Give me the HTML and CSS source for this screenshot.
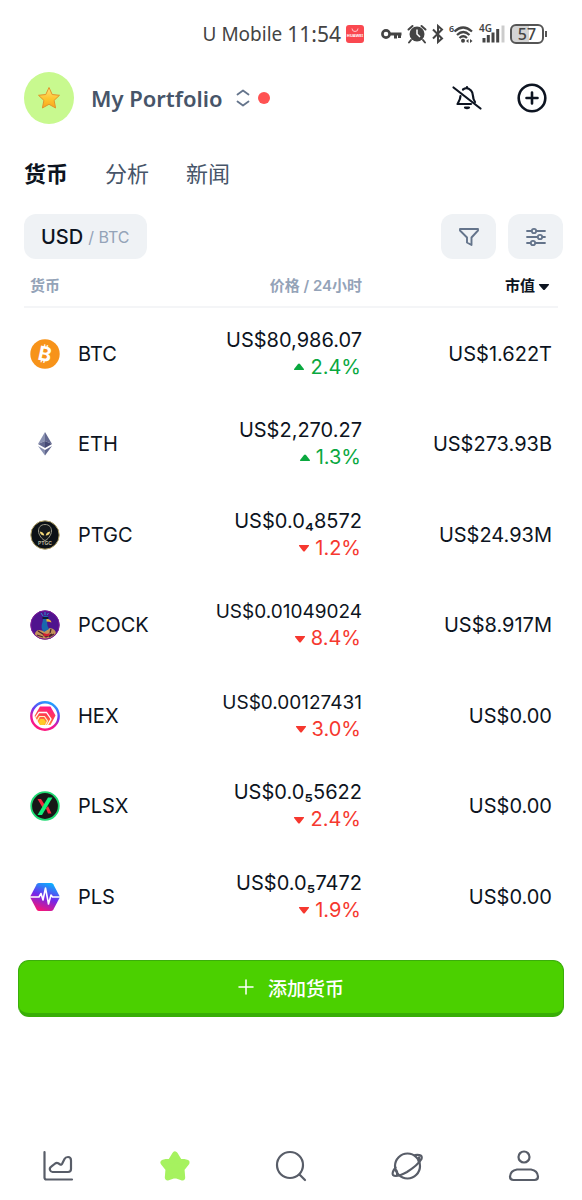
FILE: index.html
```html
<!DOCTYPE html>
<html lang="zh-CN">
<head>
<meta charset="utf-8">
<meta name="viewport" content="width=device-width, initial-scale=1">
<title>My Portfolio</title>
<link rel="stylesheet" href="styles.css">
</head>
<body>
<div class="status-bar">
  <span class="carrier">U Mobile</span>
  <span class="clock">11:54</span>
  <svg class="app-badge" width="18" height="18" viewBox="0 0 18 18" aria-hidden="true"><rect width="18" height="18" rx="3" fill="#fa4850"/><path d="M6 3.500a3 3 0 0 0 6 0" fill="none" stroke="#ffc4c8" stroke-width="1"/><text x="9" y="12" text-anchor="middle" font-size="4" font-weight="700" fill="#fff">HUAWEI</text></svg>
  <svg width="21" height="14" viewBox="0 0 21 14" fill="none" stroke="#444" aria-hidden="true"><circle cx="5" cy="7" r="3.600" stroke-width="2.600"/><path d="M9 7h11.500M14.500 7v4.500M18.500 7v4" stroke-width="3"/></svg>
  <svg class="alarm" width="20" height="20" viewBox="0 0 20 20" aria-hidden="true"><circle cx="10" cy="10" r="7.500" fill="#444"/><path d="M1.500 5.500l4-3.500M18.500 5.500l-4-3.500M4 16l-2 2.500M16 16l2 2.500" stroke="#444" stroke-width="2" stroke-linecap="round"/><path d="M10 5.500V10l3 3" fill="none" stroke="#fff" stroke-width="1.500"/></svg>
  <svg width="12" height="20" viewBox="0 0 12 20" fill="none" stroke="#444" stroke-width="2" aria-hidden="true"><path d="M1 5.500l9 9-4 3.500V2l4 3.500-9 9"/></svg>
  <svg width="25" height="24" viewBox="0 -2 25 24" aria-hidden="true"><text x="0" y="8" font-size="9" font-weight="600" fill="#444">6</text><path d="M5.500 7.500q8.500-8 17.500 0M8 11q6.300-6 12.500 0M10.500 14q3.700-3.500 7.500 0" fill="none" stroke="#444" stroke-width="2.200"/><circle cx="14" cy="16.800" r="2" fill="#444"/><path d="M17 17l2.500-2v4zM23.500 17L21 15v4z" fill="#444"/></svg>
  <svg width="26" height="24" viewBox="0 -2 26 24" aria-hidden="true"><text x="0" y="8" font-size="10" font-weight="600" fill="#444">4G</text><path d="M5 14v4.500M9.300 11v7.500M14 8.500v10M18.700 5v13.500" stroke="#444" stroke-width="3"/><path d="M24 1.500v17" stroke="#ccc" stroke-width="3"/></svg>
  <span class="battery">57</span>
</div>

<header class="top">
  <span class="avatar"><svg width="24" height="24" viewBox="0 0 24 24" aria-hidden="true"><defs><linearGradient id="gold" x1="0" y1="0" x2="0" y2="1"><stop offset="0" stop-color="#ffe27a"/><stop offset=".55" stop-color="#fdc62f"/><stop offset="1" stop-color="#f9a51b"/></linearGradient></defs><path d="M12 1.500l3.200 7 7.300.8-5.400 5.100 1.500 7.600L12 18.300 5.400 22l1.500-7.600L1.500 9.300l7.300-.8z" fill="url(#gold)" stroke="#e3942a" stroke-width="1" stroke-linejoin="round"/></svg></span>
  <button class="portfolio" type="button">My Portfolio
    <svg width="14" height="18" viewBox="0 0 14 18" fill="none" stroke="#64748b" stroke-width="1.800" stroke-linecap="round" stroke-linejoin="round" aria-hidden="true"><path d="M1.500 5.500L7 1.500l5.500 4M1.500 12.500l5.500 4 5.500-4"/></svg>
  </button>
  <span class="alert-dot"></span>
  <button class="icon-button bell" type="button" aria-label="通知">
    <svg width="30" height="30" viewBox="0 0 30 30" fill="none" stroke="#0d1421" stroke-width="2.200" stroke-linecap="round" stroke-linejoin="round" aria-hidden="true"><path d="M1.500 4.500l27 21"/><path d="M11 6.500Q15 3.500 19 7.500q2 2 2 5.500 0 3 2 6M15 4v1M8.500 13c0 3-1 4.500-3 8H19"/><path d="M13 24.500a3 2 0 0 0 4 0z" fill="#0d1421"/></svg>
  </button>
  <button class="icon-button" type="button" aria-label="添加">
    <svg width="30" height="30" viewBox="0 0 30 30" fill="none" stroke="#0d1421" stroke-width="2.600" stroke-linecap="round" aria-hidden="true"><circle cx="15" cy="15" r="13.300"/><path d="M15 9.500v11M9.500 15h11"/></svg>
  </button>
</header>

<nav class="tabs" aria-label="视图">
  <a class="tab tab-active" href="#coins">货币</a>
  <a class="tab" href="#analysis">分析</a>
  <a class="tab" href="#news">新闻</a>
</nav>

<main>
  <div class="controls">
    <button class="pill currency" type="button"><span class="currency-on">USD</span><span class="currency-off">/ BTC</span></button>
    <button class="pill tool" type="button" aria-label="筛选">
      <svg width="22" height="20" viewBox="0 0 22 20" fill="none" stroke="#64748b" stroke-width="1.900" stroke-linejoin="round" aria-hidden="true"><path d="M2 2h18v1.500l-6.500 7V18L9 15.500v-5L2 3.500z"/></svg>
    </button>
    <button class="pill tool" type="button" aria-label="设置">
      <svg width="20" height="20" viewBox="0 0 20 20" fill="none" stroke="#64748b" stroke-width="1.800" stroke-linecap="round" aria-hidden="true"><path d="M1 4h4.500M10.500 4H19M1 10h10.500M16.500 10H19M1 16h3.500M9.500 16H19"/><circle cx="8" cy="4" r="2.200"/><circle cx="14" cy="10" r="2.200"/><circle cx="7" cy="16" r="2.200"/></svg>
    </button>
  </div>

  <table class="coins" id="coins">
    <thead>
      <tr><th class="col-name" scope="col">货币</th><th class="col-price" scope="col">价格 / 24小时</th><th class="col-cap" scope="col"><button class="sort" type="button">市值<svg width="12" height="12" viewBox="0 -4 12 12" aria-hidden="true"><path d="M1.500 1h9q1 0 .4.900L7 6.500q-1 1-2 0L1.100 1.900Q.500 1 1.500 1z" fill="#0d1421"/></svg></button></th></tr>
    </thead>
    <tbody>
      <tr>
        <td><div class="coin"><svg width="30" height="30" viewBox="0 0 30 30" aria-hidden="true"><circle cx="15" cy="15" r="14.700" fill="#f7931a"/><text x="15" y="22" text-anchor="middle" font-size="20" font-weight="700" fill="#fff" transform="rotate(12 15 15)">₿</text></svg>BTC</div></td>
        <td><div class="price">US$80,986.07</div><div class="change up"><svg width="12" height="10" viewBox="0 0 12 10" aria-hidden="true"><path d="M1.500 8q-1-.200-.4-.9L5 2q1-1 2 0l3.900 5.100q.6.700-.4.900z" fill="currentColor"/></svg>2.4%</div></td>
        <td>US$1.622T</td>
      </tr>
      <tr>
        <td><div class="coin"><svg width="30" height="30" viewBox="0 0 30 30" aria-hidden="true"><path d="M15 3L8 15l7-3z" fill="#8a92b2"/><path d="M15 3l7 12-7-3z" fill="#62688f"/><path d="M8 15l7-3v7z" fill="#62688f"/><path d="M22 15l-7-3v7z" fill="#454a75"/><path d="M8 17l7 4v5.500z" fill="#8a92b2"/><path d="M22 17l-7 4v5.500z" fill="#62688f"/></svg>ETH</div></td>
        <td><div class="price">US$2,270.27</div><div class="change up"><svg width="12" height="10" viewBox="0 0 12 10" aria-hidden="true"><path d="M1.500 8q-1-.200-.4-.9L5 2q1-1 2 0l3.900 5.100q.6.700-.4.900z" fill="currentColor"/></svg>1.3%</div></td>
        <td>US$273.93B</td>
      </tr>
      <tr>
        <td><div class="coin"><svg width="30" height="30" viewBox="0 0 30 30" aria-hidden="true"><circle cx="15" cy="15" r="14.200" fill="#0c1116" stroke="#b5a56a" stroke-width="1"/><path d="M15 4.500c4.500 0 6.500 3 6.500 6.500 0 4-4 9-6.500 9.500-2.500-.5-6.500-5.500-6.500-9.500 0-3.500 2-6.500 6.500-6.500z" fill="#15191b" stroke="#9b9987" stroke-width="1"/><path d="M9.800 11.500q4 .5 4.500 4-4 0-4.500-4zM20.200 11.500q-4 .5-4.500 4 4 0 4.500-4z" fill="#f4d97a"/><text x="15" y="25" text-anchor="middle" font-size="5" font-weight="700" fill="#b9b59c">PTGC</text></svg>PTGC</div></td>
        <td><div class="price">US$0.0₄8572</div><div class="change down"><svg width="12" height="10" viewBox="0 0 12 10" aria-hidden="true"><path d="M1.500 2q-1 .2-.4.900L5 8q1 1 2 0l3.900-5.100q.6-.7-.4-.9z" fill="currentColor"/></svg>1.2%</div></td>
        <td>US$24.93M</td>
      </tr>
      <tr>
        <td><div class="coin"><svg width="30" height="30" viewBox="0 0 30 30" aria-hidden="true"><defs><clipPath id="disc"><circle cx="15" cy="15" r="14.500"/></clipPath></defs><circle cx="15" cy="15" r="14.500" fill="#4f138e"/><g clip-path="url(#disc)"><path d="M5 27q-1-6 4-7l5 1 6-3q6 1 6 6l-6 6H9z" fill="#c3935a"/><path d="M8 21l5 3 3 3 6-3M7 25l6 2M19 27l5-3M21 19l-1 4" stroke="#4b2430" stroke-width="1.300" fill="none"/><path d="M13 23l4 1 3-1-1 3-5 .5z" fill="#d41f32"/><path d="M13.500 6q5-1.500 5.500 3l-2 3q0 4 2 7l-5 3q-4-4-1.500-10z" fill="#1968ad"/><path d="M13 6l-2-3M15 5V2M17 5l1.500-2" stroke="#2c8fca" stroke-width="1"/><path d="M16.500 9q4-.5 5 3.500-2-1-5-1z" fill="#f4b63a"/><path d="M12.500 8h6" stroke="#101a36" stroke-width="2"/></g><circle cx="15" cy="15" r="14.200" fill="none" stroke="#7d1b98" stroke-width="1"/></svg>PCOCK</div></td>
        <td><div class="price price-long">US$0.01049024</div><div class="change down"><svg width="12" height="10" viewBox="0 0 12 10" aria-hidden="true"><path d="M1.500 2q-1 .2-.4.900L5 8q1 1 2 0l3.900-5.100q.6-.7-.4-.9z" fill="currentColor"/></svg>8.4%</div></td>
        <td>US$8.917M</td>
      </tr>
      <tr>
        <td><div class="coin"><svg width="30" height="30" viewBox="0 0 30 30" aria-hidden="true"><defs><linearGradient id="ring" x1=".7" y1="0" x2=".3" y2="1"><stop offset="0" stop-color="#20a5ff"/><stop offset=".4" stop-color="#6b38f2"/><stop offset=".7" stop-color="#ee169a"/><stop offset="1" stop-color="#ff197c"/></linearGradient><linearGradient id="hot" x1=".7" y1="0" x2=".3" y2="1"><stop offset="0" stop-color="#ff1493"/><stop offset=".5" stop-color="#ff414b"/><stop offset="1" stop-color="#ffb628"/></linearGradient></defs><circle cx="15" cy="15" r="13.700" fill="#fff" stroke="url(#ring)" stroke-width="2.400"/><path d="M10 5.500h10.500l5 9-5 9.500H10L4.500 15z" fill="url(#hot)"/><path d="M5.500 16.500l3.500-5h7.500l4.500 6.500-3.500 6" fill="none" stroke="#fff" stroke-width="1.300"/><path d="M7 20l2.500-4.500h5l3 4.500-2 4" fill="none" stroke="#fff3c8" stroke-width="1.200"/><path d="M10.500 18h3.500l2 3-2 3h-3.500l-2-3z" fill="#ffc928"/></svg>HEX</div></td>
        <td><div class="price price-long">US$0.00127431</div><div class="change down"><svg width="12" height="10" viewBox="0 0 12 10" aria-hidden="true"><path d="M1.500 2q-1 .2-.4.900L5 8q1 1 2 0l3.900-5.100q.6-.7-.4-.9z" fill="currentColor"/></svg>3.0%</div></td>
        <td>US$0.00</td>
      </tr>
      <tr>
        <td><div class="coin"><svg width="30" height="30" viewBox="0 0 30 30" aria-hidden="true"><circle cx="15" cy="15" r="13.800" fill="#171717" stroke="#1fdb72" stroke-width="1.800"/><path d="M7.500 8H11l3.500 5.500-2 3zM16 17.500l2-2.500 3.500 7.500H18z" fill="#f02a3d"/><path d="M18 6.500h4.500L12 24H7.500z" fill="#10f27a"/></svg>PLSX</div></td>
        <td><div class="price">US$0.0₅5622</div><div class="change down"><svg width="12" height="10" viewBox="0 0 12 10" aria-hidden="true"><path d="M1.500 2q-1 .2-.4.900L5 8q1 1 2 0l3.900-5.100q.6-.7-.4-.9z" fill="currentColor"/></svg>2.4%</div></td>
        <td>US$0.00</td>
      </tr>
      <tr>
        <td><div class="coin"><svg width="30" height="30" viewBox="0 0 30 30" aria-hidden="true"><defs><linearGradient id="pulse" x1=".7" y1="0" x2=".3" y2="1"><stop offset="0" stop-color="#08b4ff"/><stop offset=".5" stop-color="#7128ec"/><stop offset="1" stop-color="#fb1572"/></linearGradient></defs><path d="M9 1h12q1.500 0 2.300 1.300L30 15l-6.700 12.700Q22.500 29 21 29H9q-1.500 0-2.300-1.300L0 15 6.700 2.300Q7.500 1 9 1z" fill="url(#pulse)"/><path d="M0 15h9l2-3.500 2 6.500 2.500-12 3 16 2.500-9 1.500 2H30" fill="none" stroke="#fff" stroke-width="1.600" stroke-linejoin="round"/></svg>PLS</div></td>
        <td><div class="price">US$0.0₅7472</div><div class="change down"><svg width="12" height="10" viewBox="0 0 12 10" aria-hidden="true"><path d="M1.500 2q-1 .2-.4.900L5 8q1 1 2 0l3.900-5.100q.6-.7-.4-.9z" fill="currentColor"/></svg>1.9%</div></td>
        <td>US$0.00</td>
      </tr>
    </tbody>
  </table>

  <button class="add-coin" type="button"><svg width="16" height="16" viewBox="0 0 16 16" stroke="#fff" stroke-width="1.500" stroke-linecap="round" aria-hidden="true"><path d="M8 1v14M1 8h14"/></svg>添加货币</button>
</main>

<nav class="bottom-nav" aria-label="主导航">
  <a href="#market" aria-label="市场"><svg width="32" height="32" viewBox="0 0 32 32" fill="none" stroke="#585d68" stroke-width="2.200" stroke-linecap="round" stroke-linejoin="round" aria-hidden="true"><path d="M2.500 2v25.500q0 2 2 2H30"/><path d="M10.500 22H26q3 0 3-3v-8.500Q29 7 26 7q-2.500 0-3.500 2L20 14q-.7 1.200-1.800.5l-2-1.200q-1.500-.8-3 .2l-4 3.200Q7.300 18 8 20q.7 2 2.500 2z"/></svg></a>
  <a href="#portfolio" aria-label="投资组合" aria-current="page"><svg width="32" height="32" viewBox="0 0 32 32" aria-hidden="true"><path d="M16 4.500l3.800 6.200 7.700 2-5 6.300.7 8.500L16 25l-7.200 2.500.7-8.500-5-6.300 7.700-2z" fill="#a6f25f" stroke="#a6f25f" stroke-width="6" stroke-linejoin="round"/></svg></a>
  <a href="#search" aria-label="搜索"><svg width="32" height="32" viewBox="0 0 32 32" fill="none" stroke="#585d68" stroke-width="2.200" stroke-linecap="round" aria-hidden="true"><circle cx="15" cy="15" r="13"/><path d="M24.500 24.500L30 30"/></svg></a>
  <a href="#explore" aria-label="探索"><svg width="32" height="32" viewBox="0 0 32 32" fill="none" stroke="#585d68" stroke-width="2.200" stroke-linecap="round" stroke-linejoin="round" aria-hidden="true"><circle cx="16.500" cy="16" r="12.500"/><path d="M4.500 17.500q-4 5.500-2.500 7.500 3 3 14-3Q27 15 30.500 9q1.500-5-6.500-4M27.500 11q1-2 .5-3.500M5.500 20.500q1 1 .5 4"/></svg></a>
  <a href="#account" aria-label="账户"><svg width="32" height="32" viewBox="0 0 32 32" fill="none" stroke="#585d68" stroke-width="2.200" aria-hidden="true"><circle cx="16" cy="7" r="5.500"/><path d="M9 19.500h14q6.500 1 7 7 0 3.500-3.500 3.500h-21Q2 30 2 26.500q.5-6 7-7z"/></svg></a>
</nav>
</body>
</html>
```
FILE: styles.css
```css
* {
  box-sizing: border-box;
}

body {
  margin: 0;
  min-height: 100vh;
  display: flex;
  flex-direction: column;
  background: #fff;
  color: #0d1421;
  font-family: Inter, "Noto Sans CJK SC", sans-serif;
}

button {
  border: 0;
  padding: 0;
  background: none;
  color: inherit;
  font: inherit;
  cursor: pointer;
}

a {
  color: inherit;
  text-decoration: none;
}

svg {
  display: block;
  flex-shrink: 0;
  overflow: visible;
}

.status-bar {
  display: flex;
  align-items: center;
  justify-content: flex-end;
  gap: 5px;
  height: 68px;
  padding-right: 38px;
  color: #444;
  font-family: "Noto Sans", sans-serif;
}

.carrier {
  font-size: 19px;
}

.clock {
  font-size: 21px;
}

.app-badge {
  margin-right: 12px;
}

.battery {
  position: relative;
  width: 34px;
  height: 20px;
  border: 2px solid #555;
  border-radius: 6px;
  background: linear-gradient(to right, #d4d4d4 57%, #fff 57%);
  font-size: 16px;
  font-weight: 500;
  line-height: 16px;
  text-align: center;
}

.battery::after {
  content: "";
  position: absolute;
  top: 5px;
  right: -5px;
  width: 2px;
  height: 6px;
  background: #555;
}

.top {
  display: flex;
  align-items: center;
  padding: 4px 35px 0 24px;
}

.avatar {
  display: grid;
  place-items: center;
  width: 50px;
  height: 52px;
  border-radius: 50%;
  background: #c8f98f;
}

.portfolio {
  display: flex;
  align-items: center;
  gap: 13px;
  margin-left: 17px;
  color: #475569;
  font-family: "Noto Sans", sans-serif;
  font-size: 22px;
  font-weight: 600;
  line-height: 28px;
}

.alert-dot {
  width: 12px;
  height: 12px;
  margin-left: 8px;
  border-radius: 50%;
  background: #ff5252;
}

.icon-button {
  margin-left: 35px;
}

.bell {
  margin-left: auto;
}

.tabs {
  display: flex;
  gap: 37px;
  padding: 34px 24px 24px;
  font-size: 22px;
  line-height: 32px;
}

.tab {
  color: #475569;
}

.tab-active {
  color: #0d1421;
  font-weight: 700;
}

.controls {
  display: flex;
  gap: 12px;
  padding: 0 19px 0 24px;
}

.pill {
  display: flex;
  align-items: center;
  justify-content: center;
  height: 45px;
  border-radius: 12px;
  background: #eff2f5;
}

.currency {
  gap: 5px;
  margin-right: auto;
  padding: 0 17px;
}

.currency-on {
  font-size: 20px;
  font-weight: 500;
}

.currency-off {
  color: #94a3b8;
  font-size: 16px;
}

.tool {
  width: 55px;
}

main {
  display: flex;
  flex-direction: column;
}

.coins {
  margin: 4px 24px 0;
  border-collapse: separate;
  border-spacing: 0;
  table-layout: fixed;
}

.coins th {
  height: 45px;
  padding: 0 6px;
  border-bottom: 2px solid #f4f5f7;
  color: #94a3b8;
  font-size: 15px;
  font-weight: 600;
  text-align: right;
}

.coins th.col-name {
  width: 140px;
  text-align: left;
}

.coins th.col-cap {
  width: 190px;
  color: #0d1421;
}

.sort {
  display: inline-flex;
  align-items: center;
  gap: 3px;
  padding-right: 2px;
}

.coins td {
  height: 91px;
  padding: 0 6px;
  font-size: 20px;
  text-align: right;
}

.coins tr:nth-child(even) td {
  height: 90px;
}

.coin {
  display: flex;
  align-items: center;
  gap: 18px;
}

.price {
  line-height: 27px;
}

.price-long {
  font-size: 19px;
}

.change {
  display: flex;
  align-items: center;
  justify-content: flex-end;
  gap: 5px;
  padding-right: 1px;
  line-height: 27px;
}

.up {
  color: #0aa83f;
}

.down {
  color: #f6382f;
}

.add-coin {
  display: flex;
  align-items: center;
  justify-content: center;
  gap: 14px;
  height: 57px;
  margin: 18px 18px 0;
  border: 1px solid #3bae0b;
  border-bottom: 4px solid #38ae06;
  border-radius: 11px;
  background: #4bd000;
  color: #fff;
  font-size: 19px;
  font-weight: 500;
}

.bottom-nav {
  display: grid;
  grid-template-columns: repeat(5, 1fr);
  margin-top: auto;
  padding: 18px 0;
}

.bottom-nav a {
  display: grid;
  place-items: center;
}
```
